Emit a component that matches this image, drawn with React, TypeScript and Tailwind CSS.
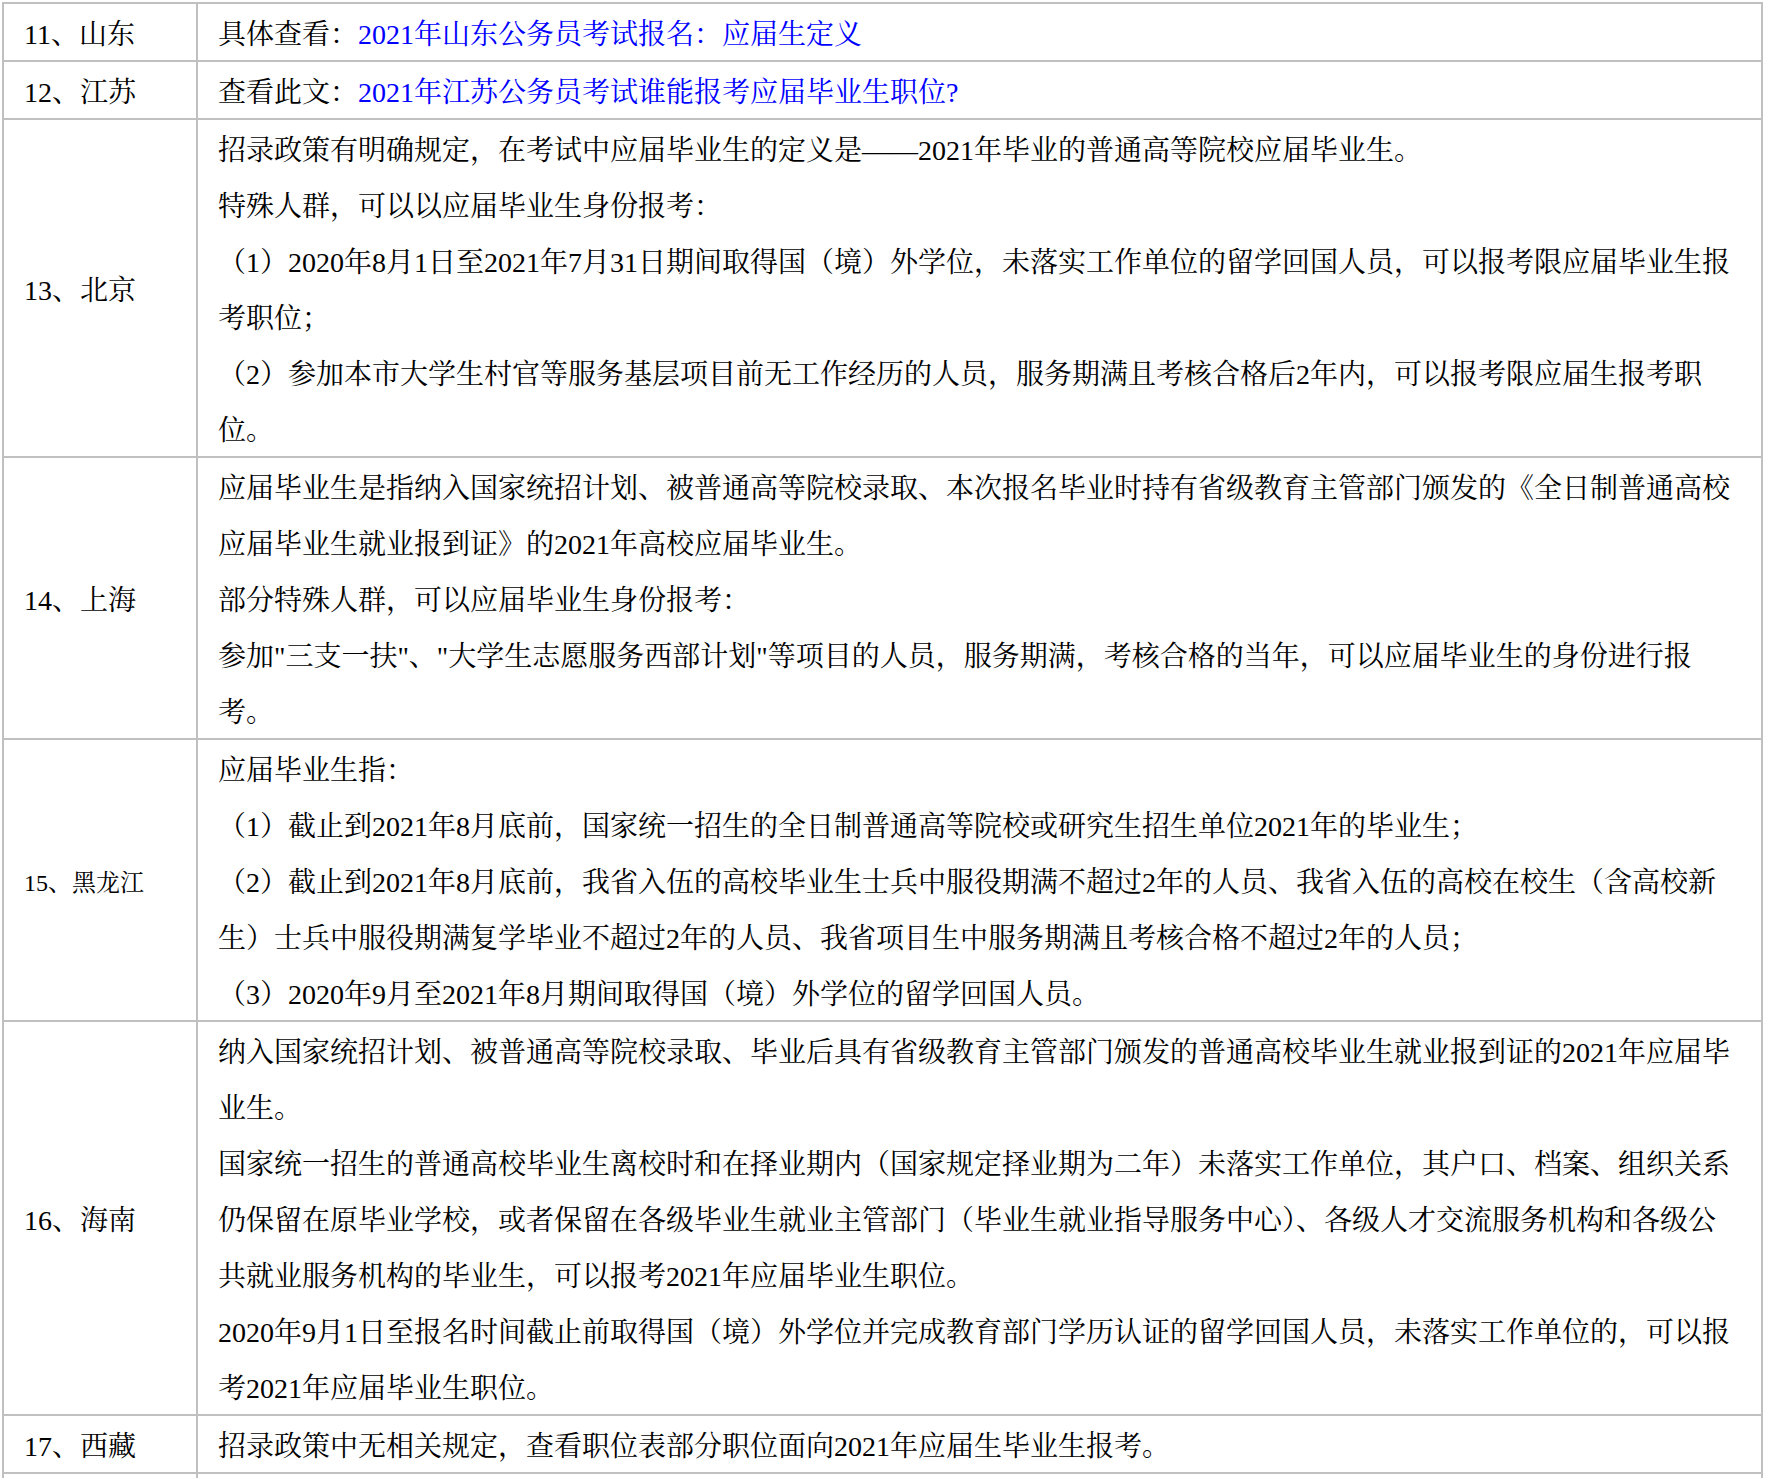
import React from "react";

type Row = {
  label: string;
  small?: boolean;
  lines: React.ReactNode[];
};

const link = "text-[#0000ff]";

const rows: Row[] = [
  {
    label: "11、山东",
    lines: [
      <>
        具体查看：<span className={link}>2021年山东公务员考试报名：应届生定义</span>
      </>,
    ],
  },
  {
    label: "12、江苏",
    lines: [
      <>
        查看此文：<span className={link}>2021年江苏公务员考试谁能报考应届毕业生职位?</span>
      </>,
    ],
  },
  {
    label: "13、北京",
    lines: [
      "招录政策有明确规定，在考试中应届毕业生的定义是——2021年毕业的普通高等院校应届毕业生。",
      "特殊人群，可以以应届毕业生身份报考：",
      "（1）2020年8月1日至2021年7月31日期间取得国（境）外学位，未落实工作单位的留学回国人员，可以报考限应届毕业生报",
      "考职位；",
      "（2）参加本市大学生村官等服务基层项目前无工作经历的人员，服务期满且考核合格后2年内，可以报考限应届生报考职",
      "位。",
    ],
  },
  {
    label: "14、上海",
    lines: [
      "应届毕业生是指纳入国家统招计划、被普通高等院校录取、本次报名毕业时持有省级教育主管部门颁发的《全日制普通高校",
      "应届毕业生就业报到证》的2021年高校应届毕业生。",
      "部分特殊人群，可以应届毕业生身份报考：",
      "参加\"三支一扶\"、\"大学生志愿服务西部计划\"等项目的人员，服务期满，考核合格的当年，可以应届毕业生的身份进行报",
      "考。",
    ],
  },
  {
    label: "15、黑龙江",
    small: true,
    lines: [
      "应届毕业生指：",
      "（1）截止到2021年8月底前，国家统一招生的全日制普通高等院校或研究生招生单位2021年的毕业生；",
      "（2）截止到2021年8月底前，我省入伍的高校毕业生士兵中服役期满不超过2年的人员、我省入伍的高校在校生（含高校新",
      "生）士兵中服役期满复学毕业不超过2年的人员、我省项目生中服务期满且考核合格不超过2年的人员；",
      "（3）2020年9月至2021年8月期间取得国（境）外学位的留学回国人员。",
    ],
  },
  {
    label: "16、海南",
    lines: [
      "纳入国家统招计划、被普通高等院校录取、毕业后具有省级教育主管部门颁发的普通高校毕业生就业报到证的2021年应届毕",
      "业生。",
      "国家统一招生的普通高校毕业生离校时和在择业期内（国家规定择业期为二年）未落实工作单位，其户口、档案、组织关系",
      "仍保留在原毕业学校，或者保留在各级毕业生就业主管部门（毕业生就业指导服务中心）、各级人才交流服务机构和各级公",
      "共就业服务机构的毕业生，可以报考2021年应届毕业生职位。",
      "2020年9月1日至报名时间截止前取得国（境）外学位并完成教育部门学历认证的留学回国人员，未落实工作单位的，可以报",
      "考2021年应届毕业生职位。",
    ],
  },
  {
    label: "17、西藏",
    lines: ["招录政策中无相关规定，查看职位表部分职位面向2021年应届生毕业生报考。"],
  },
  {
    label: "",
    lines: [""],
  },
];

export default function App() {
  return (
    <div
      className="min-h-screen bg-white pt-[2px] pl-[2px] text-black overflow-hidden"
      style={{
        fontFamily:
          '"Liberation Serif", "Noto Serif CJK SC", "Noto Sans CJK SC", serif',
      }}
    >
      <div className="grid w-[1761px] grid-cols-[194px_1565px] border-l-2 border-t-2 border-[#c0c0c0]">
        {rows.map((row, i) => (
          <React.Fragment key={i}>
            <div
              className={`flex items-center border-r-2 border-b-2 border-[#c0c0c0] px-[20px] pt-[6px] ${
                row.small ? "text-[24px]" : "text-[28px]"
              } leading-[50px]`}
            >
              {row.label}
            </div>
            <div className="border-r-2 border-b-2 border-[#c0c0c0] px-[20px] text-[28px]">
              {row.lines.map((line, j) => (
                <div key={j} className="h-[56px] whitespace-nowrap pt-[6px] leading-[50px]">
                  {line}
                </div>
              ))}
            </div>
          </React.Fragment>
        ))}
      </div>
    </div>
  );
}
